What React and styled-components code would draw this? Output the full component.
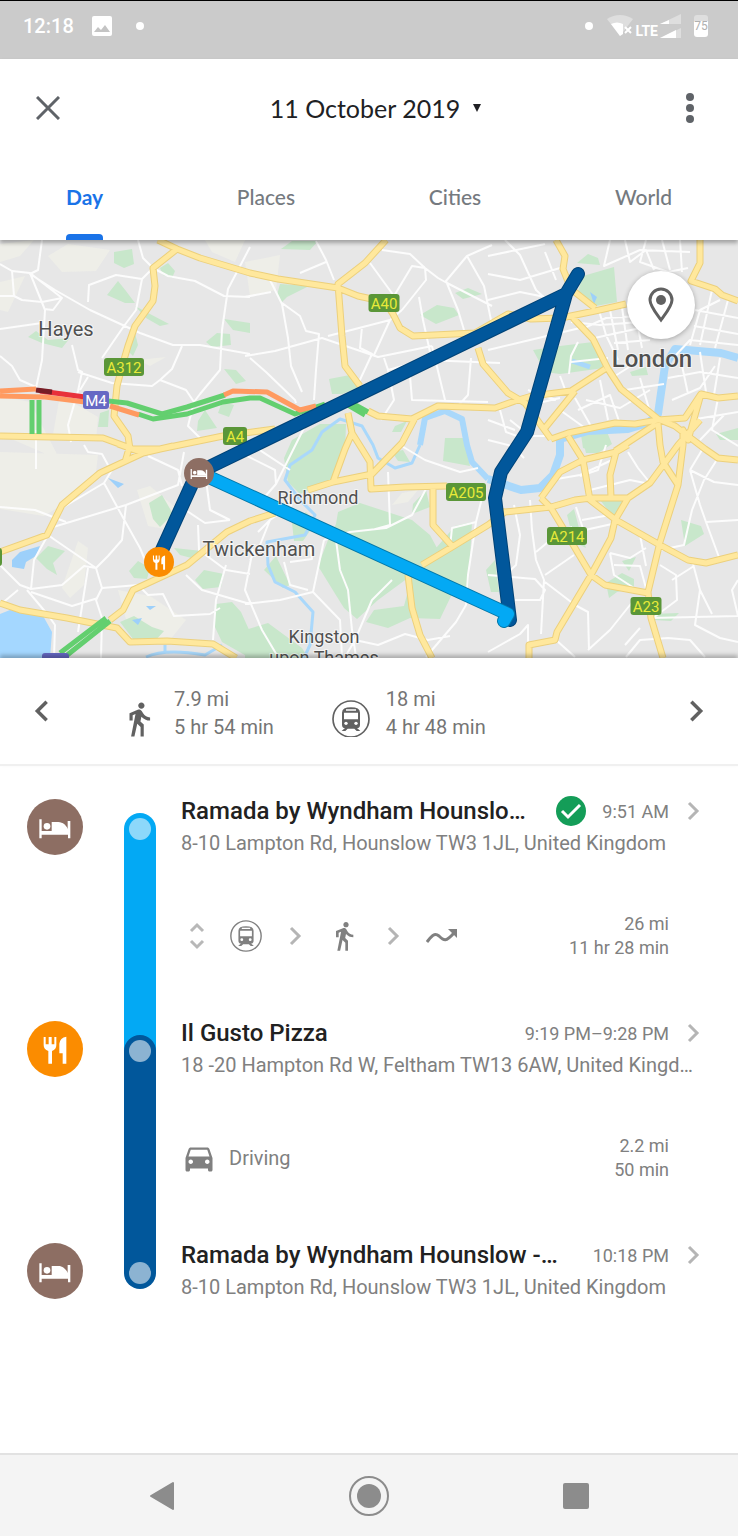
import React from 'react';
import styled, { createGlobalStyle } from 'styled-components';

const GlobalStyle = createGlobalStyle`
  * {
    box-sizing: border-box;
  }
  body {
    margin: 0;
    background-color: white;
    font-family: Roboto, "Liberation Sans", sans-serif;
  }
  button {
    background: none;
    border: none;
    color: inherit;
    cursor: pointer;
    font: inherit;
    padding: 0;
  }
  svg {
    display: block;
  }
`;

const Page = styled.div`
  display: flex;
  flex-direction: column;
  min-height: 100vh;
`;

const StatusBar = styled.div`
  display: flex;
  justify-content: space-between;
  align-items: flex-start;
  height: 59px;
  padding: 12px 30px 0 23px;
  background-color: #cbcbcb;
  border-top: 1px solid black;
  color: white;
`;

const StatusGroup = styled.div`
  display: flex;
  align-items: center;
  height: 26px;
`;

const Clock = styled.span`
  font-size: 20px;
  font-weight: 500;
  margin-right: 18px;
`;

const StatusDot = styled.span`
  width: 8px;
  height: 8px;
  border-radius: 50%;
  background-color: white;
  margin: 0 14px 0 24px;
`;

const Network = styled.span`
  align-self: flex-end;
  font-size: 14px;
  font-weight: 700;
  line-height: 16px;
  margin: 0 2px 0 1px;
`;

const Battery = styled.div`
  display: flex;
  align-items: center;
  justify-content: center;
  width: 14px;
  height: 22px;
  margin-left: 13px;
  border-radius: 3px;
  background: linear-gradient(#dedede 6px, white 6px);
  color: #b0b0b0;
  font-size: 12px;
`;

const Header = styled.header`
  position: relative;
  z-index: 1;
  background-color: white;
  box-shadow: 0 3px 4px rgba(0, 0, 0, 0.3);
  font-family: Lato, Roboto, sans-serif;
`;

const TitleBar = styled.div`
  display: flex;
  align-items: center;
  justify-content: space-between;
  height: 98px;
  padding: 0 30px;
  color: #5f6368;
`;

const IconButton = styled.button`
  display: flex;
  align-items: center;
  justify-content: center;
  width: 36px;
  height: 36px;
`;

const DateButton = styled.button`
  display: flex;
  align-items: center;
  gap: 12px;
  padding-left: 14px;
  color: #202124;
  font-size: 25px;
`;

const Tabs = styled.nav`
  display: flex;
  justify-content: space-between;
  padding: 0 66px;
`;

const Tab = styled.button`
  display: flex;
  flex-direction: column;
  align-items: center;
  justify-content: space-between;
  height: 83px;
  color: ${props => props.$active ? '#1a73e8' : '#757a7f'};
  font-size: 21px;
  font-weight: ${props => props.$active ? 700 : 500};
  line-height: 80px;

  &::after {
    content: '';
    width: 100%;
    height: 6px;
    margin-top: -6px;
    border-radius: 4px 4px 0 0;
    background-color: ${props => props.$active ? '#1a73e8' : 'transparent'};
  }
`;

const MapArea = styled.div`
  position: relative;
  aspect-ratio: 738 / 418;
  overflow: hidden;
`;

const MapDrawing = styled.svg`
  width: 100%;
  height: 100%;
`;

const PlaceButton = styled.button`
  position: absolute;
  top: 31px;
  right: 43px;
  display: flex;
  align-items: center;
  justify-content: center;
  width: 68px;
  height: 68px;
  border-radius: 50%;
  background-color: white;
  box-shadow: 0 1px 5px rgba(0, 0, 0, 0.3);
`;

const Summary = styled.section`
  position: relative;
  display: flex;
  align-items: center;
  justify-content: space-between;
  height: 108px;
  padding: 0 24px;
  background-color: white;
  border-bottom: 2px solid #f0f0f0;
  box-shadow: 0 -3px 4px rgba(0, 0, 0, 0.25);
`;

const Totals = styled.div`
  display: flex;
  flex: 1;
  gap: 58px;
  padding: 4px 0 0 60px;
`;

const Total = styled.div`
  display: flex;
  align-items: flex-end;
  gap: 16px;
  color: #757575;
  font-size: 20px;
  line-height: 28px;
`;

const TotalIcon = styled.div`
  width: 38px;
  height: 37px;
  margin-bottom: 4px;
  overflow: hidden;
  color: #616161;
`;

const Timeline = styled.ol`
  flex: 1;
  list-style: none;
  margin: 0;
  padding: 29px 33px 0 27px;
`;

const Item = styled.li`
  display: flex;
`;

const PlaceBadge = styled.div`
  width: 56px;
  height: 56px;
  margin-top: 4px;
`;

// Each track runs down behind the rounded head of the next one
const Track = styled.div`
  width: 32px;
  height: ${props => props.$last ? '32px' : 'auto'};
  margin: 18px 25px ${props => props.$last ? '0' : '-34px'} 41px;
  padding: 5px;
  background-color: ${props => props.$color};
  border-radius: ${props => props.$last ? '0 0 16px 16px' : '16px 16px 0 0'};
`;

const TrackDot = styled.div`
  width: 22px;
  height: 22px;
  border-radius: 50%;
  background-color: rgba(255, 255, 255, 0.55);
`;

const Details = styled.div`
  flex: 1;
  min-width: 0;
`;

const StopLink = styled.a`
  display: block;
  color: #808080;
  text-decoration: none;
`;

const StopHead = styled.div`
  display: flex;
  align-items: center;
  height: 32px;
`;

const StopName = styled.div`
  flex: 1;
  min-width: 0;
  overflow: hidden;
  text-overflow: ellipsis;
  white-space: nowrap;
  color: #212121;
  font-size: 24px;
  font-weight: 500;
`;

const StopTime = styled.div`
  font-size: 18px;
  margin: 0 12px 0 16px;
`;

const Address = styled.div`
  overflow: hidden;
  text-overflow: ellipsis;
  white-space: nowrap;
  font-size: 20px;
  line-height: 32px;
`;

const Leg = styled.div`
  display: flex;
  align-items: center;
  justify-content: space-between;
  padding: 53px 36px 57px 0;
  color: #808080;
`;

const LegModes = styled.div`
  display: grid;
  grid-auto-flow: column;
  grid-auto-columns: 32px;
  align-items: center;
  justify-items: center;
  gap: 17px;
`;

const LegMode = styled.div`
  display: flex;
  align-items: center;
  gap: 12px;
  font-size: 20px;
`;

const LegTotals = styled.div`
  font-size: 18px;
  line-height: 24px;
  text-align: right;
`;

const NavBar = styled.nav`
  display: flex;
  height: 83px;
  padding: 0 58px;
  background-color: #f4f4f4;
  border-top: 2px solid #e2e2e2;
`;

const NavButton = styled.button`
  display: flex;
  flex: 1;
  align-items: center;
  justify-content: center;
`;

// Icons

const Chevron = ({ size = 24, color = '#b5b5b5', flip = false }) => (
  <svg width={size} height={size} viewBox="0 0 24 24" fill="none" stroke={color} strokeWidth="3">
    <path d={flip ? 'M16 4L8 12L16 20' : 'M8 4L16 12L8 20'} />
  </svg>
);

const WalkIcon = ({ size = 32 }) => (
  <svg width={size} height={size} viewBox="0 0 24 24" fill="currentColor">
    <path d="M13.5 5.5c1.1 0 2-.9 2-2s-.9-2-2-2-2 .9-2 2 .9 2 2 2zM9.8 8.9L7 23h2.1l1.8-8 2.1 2v6h2v-7.5l-2.1-2 .6-3C14.8 12 16.8 13 19 13v-2c-1.9 0-3.5-1-4.3-2.4l-1-1.6c-.4-.6-1-1-1.7-1-.3 0-.5.1-.8.1L6 8.3V13h2V9.6l1.8-.7" />
  </svg>
);

const TrainIcon = ({ size = 32 }) => (
  <svg width={size} height={size} viewBox="0 0 114 114">
    <circle cx="57" cy="57" r="54" fill="none" stroke="currentColor" strokeWidth="5" />
    <path d="M30 74V38Q30 22 57 22Q84 22 84 38V74Q84 84 75 84L85 93H74L67 86H47L40 93H29L39 84Q30 84 30 74z" fill="currentColor" />
    <path d="M36 38H78V58H36zM42 28H72V32H42z" fill="white" />
    <circle cx="42" cy="70" r="5" fill="white" />
    <circle cx="72" cy="70" r="5" fill="white" />
  </svg>
);

const ExpandIcon = () => (
  <svg width="32" height="32" viewBox="0 0 32 32" fill="none" stroke="#b8b8b8" strokeWidth="3">
    <path d="M10 11L16 5L22 11M10 21L16 27L22 21" />
  </svg>
);

const MovingIcon = () => (
  <svg width="32" height="32" viewBox="0 0 32 32">
    <path d="M1 22C5 17 8 12 13 16C18 21 20 22 28 13" fill="none" stroke="currentColor" strokeWidth="3" />
    <path d="M22 9H31V18z" fill="currentColor" />
  </svg>
);

const CarIcon = () => (
  <svg width="36" height="36" viewBox="0 0 24 24" fill="currentColor">
    <path d="M18.92 6.01C18.72 5.42 18.16 5 17.5 5h-11c-.66 0-1.21.42-1.42 1.01L3 12v8c0 .55.45 1 1 1h1c.55 0 1-.45 1-1v-1h12v1c0 .55.45 1 1 1h1c.55 0 1-.45 1-1v-8l-2.08-5.99zM6.5 16c-.83 0-1.5-.67-1.5-1.5S5.67 13 6.5 13s1.5.67 1.5 1.5S7.33 16 6.5 16zm11 0c-.83 0-1.5-.67-1.5-1.5s.67-1.5 1.5-1.5 1.5.67 1.5 1.5-.67 1.5-1.5 1.5zM5 11l1.5-4.5h11L19 11H5z" />
  </svg>
);

const CheckIcon = () => (
  <svg width="30" height="30" viewBox="0 0 30 30">
    <circle cx="15" cy="15" r="15" fill="#149d58" />
    <path d="M6 15L12 21L24 9" fill="none" stroke="white" strokeWidth="3" />
  </svg>
);

const HotelIcon = props => (
  <svg viewBox="0 0 168 168" {...props}>
    <circle cx="84" cy="84" r="84" fill="#8d6e63" />
    <path d="M37 61H44V96H122V66H130V118H123V107H44V118H37z" fill="white" />
    <path d="M74 69H94C108 69 118 80 124 92V97H74z" fill="white" />
    <circle cx="60" cy="82" r="10" fill="white" />
  </svg>
);

const FoodIcon = props => (
  <svg viewBox="0 0 168 168" {...props}>
    <circle cx="84" cy="84" r="84" fill="#fb8c00" />
    <path d="M50 48H56V70H65V48H74V70H82V48H88V72Q88 86 75 90V128H64V90Q50 86 50 72z" fill="white" />
    <path d="M97 92V68Q99 50 118 47V128H107V97H97z" fill="white" />
  </svg>
);

// Map geometry

const parks = [
  'M114 252L132 249L134 264L124 268L114 263z',
  'M160 268L168 263L175 271L172 278L163 275z',
  'M118 281L126 291L135 303L125 303L107 295z',
  'M135 306L150 314L169 324L160 326L146 318z',
  'M28 337L36 331L48 340L70 338L62 348L42 343z',
  'M224 319L250 323L250 333L233 330z',
  'M206 342L217 333L230 334L231 345L212 347z',
  'M135 333L138 345L133 356L129 352z',
  'M100 413L109 410L108 427L98 427z',
  'M224 369L236 370L246 381L236 384z',
  'M198 421L205 410L217 428L197 431z M222 402L234 405L229 417L218 413z',
  'M281 249L292 241L318 241L310 250z',
  'M280 284L309 286L287 297L281 303L277 295z',
  'M420 315L437 305L454 308L459 315L436 324z',
  'M455 293L468 288L482 294L463 299z',
  'M329 379L350 375L358 388L342 394L332 394z',
  'M577 263L588 254L598 258L600 265L588 264z',
  'M583 276L614 267L617 302L596 306L578 291z',
  'M533 350L560 346L593 342L604 368L560 374L545 372z',
  'M581 435L607 432L612 444L598 453L583 448z',
  'M630 372L646 367L648 375L632 376z',
  'M716 434L738 428L738 440L720 440z',
  'M284 458L292 440L320 424L346 424L345 452L332 480L300 494L288 482z',
  'M395 426L407 421L401 432L392 432z',
  'M445 438L465 438L470 466L443 461z',
  'M392 452L403 450L410 462L398 461z',
  'M338 512L360 503L412 520L430 535L437 548L412 575L378 600L357 619L344 608L334 592L318 566L328 540L336 524z',
  'M412 576L455 526L472 522L468 595L453 592L440 619L410 618L388 628L366 622L374 610L404 606z',
  'M413 504L426 490L430 507L412 514z',
  'M264 570L276 556L290 585L283 588z',
  'M292 523L306 512L316 522L303 541L294 541z',
  'M245 630L268 623L302 648L308 658L245 658z',
  'M216 604L232 602L241 612L250 632L250 658L222 642L214 625z',
  'M149 503L162 495L173 514L160 527L153 519z',
  'M129 571L138 561L150 568L147 579L134 578z',
  'M174 548L202 551L199 560L180 555z',
  'M195 580L204 570L224 574L221 587L203 589z',
  'M36 558L48 546L65 551L53 563L57 575L47 569z',
  'M120 622L134 616L152 627L164 631L155 641L133 639z',
  'M681 520L701 526L704 534L685 546z',
  'M600 500L624 500L618 521L611 514z',
  'M567 515L574 509L580 532L586 548L574 542z',
  'M606 583L622 573L634 579L634 588L617 592L609 598z',
  'M622 561L636 557L629 571z',
  'M651 614L679 613L671 621L654 620z',
  'M584 445L603 445L598 453L586 453z',
  'M486 570L495 560L499 592L491 592z',
];

const fields = [
  'M48 256L68 244L110 250L96 271L62 272z',
  'M0 282L25 276L8 312L0 310z',
  'M0 396L30 402L60 460L0 434z',
  'M0 452L98 455L96 473L62 505L44 516L0 509z',
  'M205 240L245 240L235 262L212 252z',
  'M0 244L34 240L20 256L0 262z',
  'M62 588L78 541L88 548L84 585L70 598z',
  'M245 262L280 255L276 290L250 296z',
  'M138 360L166 357L150 366z',
  'M60 395L98 417L96 440L52 440z',
  'M392 505L402 493L418 490L408 502z',
  'M137 490L150 486L176 508L165 529L148 526z',
  'M118 590L150 596L186 620L170 640L130 634z',
];

const minorRoads = [
  'M42 240L38 270L30 274L55 290L90 310L140 333L173 345L200 345L250 354',
  'M0 264L12 271L30 273L45 310L42 360L36 388',
  'M0 296L14 296L22 300L42 302L62 298',
  'M30 273L62 298L53 310L44 309',
  'M0 329L42 323',
  'M12 271L14 296',
  'M88 302L89 285L116 275L142 279L153 268',
  'M138 240L143 258L153 268',
  'M142 279L136 310L124 326L102 358',
  'M153 268L168 276L195 281L224 296L250 297',
  'M250 247L228 289L222 330L220 370L200 394L194 402',
  'M72 345L78 370L82 372L78 391L68 425L71 442',
  'M78 372L112 383L152 386L160 380L172 369L182 346',
  'M160 380L186 390L194 402L188 426L204 442',
  'M88 377L80 390',
  'M0 356L12 366L20 380L38 388',
  'M36 430L36 469',
  'M316 241L326 260L334 280',
  'M326 262L300 273',
  'M245 297L271 292M270 280L282 304L288 338L291 366L302 392',
  'M282 303L300 316L306 331L319 334L316 370L314 400',
  'M245 356L275 351L322 338L378 357L432 346',
  'M250 358L266 372L295 400L296 403',
  'M328 336L390 320L402 310',
  'M362 327L360 348L372 354L358 384',
  'M390 320L374 355',
  'M382 250L410 254L425 268L438 278L447 283L492 306',
  'M370 263L386 285L394 296L412 266L425 268',
  'M425 268L426 280L402 310',
  'M419 297L423 320L430 352',
  'M492 245L467 256L446 281L458 310L464 330',
  'M467 256L484 286L492 325',
  'M384 358L388 370L425 360L500 363',
  'M388 370L394 400L381 420',
  'M410 376L412 400L488 402',
  'M432 346L445 400M471 358L468 395L456 408',
  'M488 350L530 340L580 328',
  'M488 300L520 292L560 300',
  'M488 274L520 280L560 268',
  'M505 240L520 255L536 290L560 312',
  'M545 252L556 280M488 256L545 244',
  'M610 240L604 266L640 250L690 252',
  'M625 240L630 262L646 250L654 270',
  'M646 240L640 262L668 272L688 268',
  'M662 240L670 270M680 240L682 272',
  'M580 330L606 318L640 316M590 339L640 328',
  'M598 307L606 335L618 360M610 310L618 350',
  'M622 307L628 350M634 306L642 348',
  'M571 322L600 325L640 322M614 343L650 340',
  'M569 374L571 356L578 342M571 362L608 358',
  'M668 378L700 372L738 378M672 400L700 388L715 366',
  'M690 345L700 310L720 300M700 345L712 290M715 348L728 300',
  'M695 310L738 318M694 326L738 334M676 355L690 340L738 345',
  'M680 356L688 394M700 352L706 392M720 358L714 395',
  'M640 378L650 412M625 390L664 384M612 378L640 360',
  'M586 400L620 408L650 390M578 410L610 395L620 424',
  'M600 380L608 420M575 398L592 428M560 410L585 428',
  'M510 420L530 436L548 436M500 410L506 432L528 440',
  'M530 405L560 398M528 390L556 400M560 376L566 392',
  'M488 420L515 430M488 440L512 446L524 458',
  'M690 420L738 412M700 440L724 415M718 398L712 430L738 446',
  'M252 445L290 470M245 455L275 470L276 484L256 507',
  'M276 484L308 420L338 410',
  'M388 472L390 525L372 530',
  'M400 445L425 460L460 472L478 468',
  'M426 489L412 515L386 528L350 532L324 540',
  'M484 490L476 522L468 575L466 605L456 622L426 657',
  'M450 547L452 528L476 522',
  'M392 580L372 600L355 640L345 657',
  'M336 540L340 570L348 590L352 630L356 657',
  'M355 640L378 645L405 634L428 640L450 636',
  'M324 540L313 592L340 620L342 657',
  'M253 549L245 590L262 630L278 657',
  'M245 604L280 600L313 592',
  'M258 532L290 500M292 505L270 520L260 545L250 560',
  'M290 562L312 559L310 545',
  'M284 562L290 585L308 590',
  'M84 445L88 452L102 454L108 465',
  'M148 456L178 470L182 486',
  'M104 483L126 523L140 548L145 560',
  'M50 528L126 505L178 485L184 452',
  'M126 505L122 540L108 556L96 568L55 540L48 535',
  'M0 507L35 510L66 522M55 512L104 483L112 470',
  'M48 535L34 560L31 589L20 585L0 565',
  'M31 589L62 585L84 566L96 568L102 588L96 600L102 618L101 658',
  'M0 605L18 590M31 592L72 606L98 598',
  'M88 568L78 632M27 590L48 615L55 625L54 658',
  'M102 588L138 585L148 595L163 594L174 616L210 614L220 608',
  'M186 575L202 590L250 604M226 565L216 600L213 640',
  'M178 505L205 523L230 520M206 480L210 510L230 520M198 525L199 550L226 570L250 574',
  'M530 500L532 530L536 560L544 580L541 634',
  'M514 505L520 535L516 565L500 580M488 575L535 579L545 590L540 600L515 600',
  'M545 582L575 605L588 612L589 650M556 640L575 657',
  'M488 652L520 634L528 625L528 645',
  'M536 552L560 532L572 527M545 575L574 555',
  'M576 507L585 535M582 520L610 515M585 530L612 524',
  'M551 480L580 475L612 460M590 490L630 480L650 484',
  'M628 452L638 468L650 483M606 445L598 470L580 476',
  'M690 470L700 505L706 522L720 560M706 522L738 520',
  'M718 458L704 480L692 510L684 545L660 550',
  'M690 470L714 482L738 485M705 445L690 470',
  'M610 553L630 558L646 548M610 553L614 575L634 588',
  'M614 565L640 566L647 592M640 535L646 566',
  'M660 565L676 575L677 600L653 618',
  'M692 560L700 590L695 625L720 638L738 642M672 580L694 566',
  'M700 590L712 614M651 618L738 616L732 590L738 580',
  'M634 600L610 630L588 650M668 638L690 640L705 657',
  'M668 638L640 640L626 657M640 628L625 645',
];

const mainRoads = [
  'M158 240L177 249L200 258L250 273L278 279L338 288L358 296L372 299L386 303L393 314L400 328L413 336L475 333L508 314L531 319L561 318L595 311L626 304',
  'M177 249L153 268L155 286L153 301L135 326L128 346L123 363L117 386L114 416L128 436L130 449',
  'M0 436L103 438L133 449L160 449L223 436L275 429',
  'M173 446L143 453L100 473L62 505L47 535L0 552M118 444L143 453M130 445L125 462',
  'M0 603L20 610L67 618L117 628L130 642L167 641L213 644L236 658',
  'M110 620L123 610L133 590L187 565L227 532L250 521L275 513',
  'M308 490L333 482L372 474L402 443L415 418',
  'M333 482L345 449L352 433L362 449L370 462L371 489L405 487L447 486',
  'M433 487L433 525L452 546M422 565L452 547L488 525L505 512',
  'M408 575L412 608L420 635L432 658',
  'M386 240L365 263L338 284L342 336L345 366L360 386M348 413L352 433',
  'M368 411L378 416L412 419L438 406L495 408L515 401L532 396L571 391L605 369',
  'M478 348L483 364L508 393L525 403L551 439',
  'M556 240L565 256L563 269L571 289L595 308',
  'M573 318L593 339L608 369L621 389L658 419L675 426L705 449L718 458L738 460',
  'M700 240L700 263L691 281L715 289L722 295L738 301',
  'M551 439L568 433L615 423L635 424L658 420L685 418L701 394L718 398L738 396',
  'M575 391L545 428M658 423L660 445L663 462L678 485M656 424L615 451',
  'M701 394L688 440L683 430L683 445L678 485L660 542L648 592L651 618L663 658',
  'M700 420L678 445L650 483L628 498L591 498L575 500L551 507L505 512L492 510',
  'M541 498L560 472L583 460L616 452L628 445M568 436L583 460L590 500L616 520L660 545L688 560L706 563L738 555',
  'M628 498L615 520L611 538L591 575L557 632L555 640L529 645L529 658',
  'M541 498L551 508L575 548L591 575L605 585L648 593M616 452L610 475L611 497',
];

const labels = [
  { x: 66, y: 336, size: 20, text: 'Hayes' },
  { x: 652, y: 367, size: 24, weight: 500, text: 'London' },
  { x: 318, y: 504, size: 18, text: 'Richmond' },
  { x: 259, y: 556, size: 20, text: 'Twickenham' },
  { x: 324, y: 643, size: 18, text: 'Kingston' },
  { x: 324, y: 664, size: 18, text: 'upon Thames' },
];

const shields = [
  { x: 124, y: 367, w: 40, text: 'A312' },
  { x: 384, y: 303, w: 31, text: 'A40' },
  { x: 235, y: 436, w: 24, text: 'A4' },
  { x: 466, y: 492, w: 40, text: 'A205' },
  { x: 567, y: 536, w: 40, text: 'A214' },
  { x: 646, y: 606, w: 31, text: 'A23' },
  { x: 96, y: 400, w: 26, text: 'M4', motorway: true },
];

const RouteLine = ({ d, color, edge }) => (
  <g fill="none" strokeLinecap="round" strokeLinejoin="round">
    <path d={d} stroke={edge} strokeWidth="14" />
    <path d={d} stroke={color} strokeWidth="12" />
  </g>
);

const CityMap = () => (
  <MapDrawing viewBox="0 240 738 418" preserveAspectRatio="xMidYMid slice" role="img" aria-label="Map of the day">
    <rect x="0" y="240" width="738" height="418" fill="#e7e7e7" />
    <path d={fields.join('')} fill="#eeeee8" />
    <path d={parks.join('')} fill="#c8e7cb" />
    <g fill="none" stroke="#a9d8fb" strokeLinejoin="round">
      <path d="M738 358L721 353L675 349L665 366L661 393L658 414L648 423L628 429L588 431L560 439L560 455L553 475L540 488L521 490L488 479" strokeWidth="8" />
      <path d="M488 479L472 462L467 445L462 419L445 411L425 418L420 445" strokeWidth="6" />
      <path d="M420 445L412 463L395 468L378 458L373 445L362 426L340 419L322 432L312 450L290 465L285 480L300 500L315 515L305 535L267 542L268 565L275 582L295 592L313 612L310 645L304 658" strokeWidth="3" />
      <path d="M572 361L590 367" strokeWidth="5" />
      <path d="M165 645V651M146 657Q165 648 205 655L222 645" strokeWidth="3" />
    </g>
    <path d="M0 614L10 610L42 614L52 632L50 658L0 658z" fill="#a4d7ff" />
    <path d="M12 560L20 552L40 546L36 556L26 562L24 569L12 567z M108 478L124 484L118 488z M590 292L597 297L594 304z M132 620L142 618L138 625z M146 606L156 606L150 610z" fill="#9dd0fa" />
    <path d={minorRoads.join('')} fill="none" stroke="#fcfcfc" strokeWidth="2" strokeLinejoin="round" />
    <g fill="none" strokeLinejoin="round">
      <path d={mainRoads.join('')} stroke="#ecd07c" strokeWidth="7" />
      <path d={mainRoads.join('')} stroke="#ffe89d" strokeWidth="5" />
    </g>
    <g fill="none" strokeLinejoin="round">
      <path d="M32 400V434M39 400V434M66 656L110 621M60 653L106 618" stroke="#63cf6f" strokeWidth="5" />
      <path d="M138 414L153 419L187 414L223 402L250 398L260 398L295 414L325 404M350 402L368 412M348 405L365 415" stroke="#63cf6f" strokeWidth="5" />
      <path d="M108 401L127 403L162 414L187 407L225 395" stroke="#63cf6f" strokeWidth="5" />
      <path d="M0 391L36 389M0 396L45 397L85 402M110 406L139 415M224 395L233 391L267 392L300 410L316 406" stroke="#ff9a60" strokeWidth="5" />
      <path d="M40 391L85 397" stroke="#e8303a" strokeWidth="5" />
      <path d="M36 390L52 392" stroke="#761d26" strokeWidth="5" />
    </g>
    {shields.map(shield => (
      <g key={shield.text}>
        <rect x={shield.x - shield.w / 2} y={shield.y - 9} width={shield.w} height="18" rx="3" fill={shield.motorway ? '#6669c4' : '#5a9638'} />
        <text x={shield.x} y={shield.y + 6} textAnchor="middle" fontSize="15" fill={shield.motorway ? 'white' : '#e8ea3a'}>{shield.text}</text>
      </g>
    ))}
    <rect x="-10" y="548" width="12" height="18" rx="3" fill="#5a9638" />
    <rect x="42" y="653" width="27" height="18" rx="3" fill="#6669c4" />
    <RouteLine d="M162 550L197 473L566 294L578 274L566 294L527 432L501 472L495 498L510 620" color="#01579b" edge="#014377" />
    <RouteLine d="M200 473L508 614L504 621" color="#03a9f4" edge="#0277a8" />
    {labels.map(label => (
      <text key={label.text} x={label.x} y={label.y} fontSize={label.size} fontWeight={label.weight || 400} textAnchor="middle" fill="#505050" stroke="#ffffff" strokeOpacity="0.6" strokeWidth="2" paintOrder="stroke">
        {label.text}
      </text>
    ))}
    <HotelIcon x="184" y="458" width="30" height="30" />
    <FoodIcon x="144" y="547" width="30" height="30" />
  </MapDrawing>
);

const tabs = ['Day', 'Places', 'Cities', 'World'];

const stops = [
  {
    Icon: HotelIcon,
    track: '#03a9f4',
    name: 'Ramada by Wyndham Hounslo…',
    confirmed: true,
    time: '9:51 AM',
    address: '8-10 Lampton Rd, Hounslow TW3 1JL, United Kingdom',
  },
  {
    Icon: FoodIcon,
    track: '#01579b',
    name: 'Il Gusto Pizza',
    time: '9:19 PM–9:28 PM',
    address: '18 -20 Hampton Rd W, Feltham TW13 6AW, United Kingd…',
  },
  {
    Icon: HotelIcon,
    track: '#01579b',
    name: 'Ramada by Wyndham Hounslow -…',
    time: '10:18 PM',
    address: '8-10 Lampton Rd, Hounslow TW3 1JL, United Kingdom',
  },
];

const legs = [
  {
    modes: <LegModes><ExpandIcon /><TrainIcon /><Chevron /><WalkIcon /><Chevron /><MovingIcon /></LegModes>,
    distance: '26 mi',
    duration: '11 hr 28 min',
  },
  {
    modes: <LegMode><CarIcon />Driving</LegMode>,
    distance: '2.2 mi',
    duration: '50 min',
  },
];

const TimelineItem = ({ stop, leg }) => (
  <Item>
    <PlaceBadge><stop.Icon width="56" height="56" /></PlaceBadge>
    <Track $color={stop.track} $last={!leg}><TrackDot /></Track>
    <Details>
      <StopLink href="#">
        <StopHead>
          <StopName>{stop.name}</StopName>
          {stop.confirmed && <CheckIcon />}
          <StopTime>{stop.time}</StopTime>
          <Chevron />
        </StopHead>
        <Address>{stop.address}</Address>
      </StopLink>
      {leg && (
        <Leg>
          {leg.modes}
          <LegTotals>{leg.distance}<br />{leg.duration}</LegTotals>
        </Leg>
      )}
    </Details>
  </Item>
);

const App = () => (
  <Page>
    <GlobalStyle />
    <StatusBar>
      <StatusGroup>
        <Clock>12:18</Clock>
        <svg width="20" height="20" viewBox="0 0 20 20">
          <rect width="20" height="20" rx="2" fill="white" />
          <path d="M2 16L6 11L9 14L13 9L18 16z" fill="#c4c4c4" />
        </svg>
        <StatusDot />
      </StatusGroup>
      <StatusGroup>
        <StatusDot />
        <svg width="27" height="24" viewBox="0 0 27 24">
          <path d="M0 5Q13 -3 26 5L13 22z" fill="#dedede" />
          <path d="M4 10Q10 7 16 10V20L13 22z" fill="white" />
          <path d="M18 13L24 19M24 13L18 19" stroke="white" strokeWidth="2" />
        </svg>
        <Network>LTE</Network>
        <svg width="21" height="24" viewBox="0 0 21 24">
          <path d="M0 10L21 0V10zM0 24L21 14V24z" fill="#dedede" />
          <path d="M0 10L9 6V10zM0 24L16 16V24z" fill="white" />
        </svg>
        <Battery>75</Battery>
      </StatusGroup>
    </StatusBar>
    <Header>
      <TitleBar>
        <IconButton aria-label="Close">
          <svg width="24" height="24" viewBox="0 0 24 24" stroke="currentColor" strokeWidth="3">
            <path d="M1 1L23 23M23 1L1 23" />
          </svg>
        </IconButton>
        <DateButton>
          11 October 2019
          <svg width="10" height="10" viewBox="0 0 10 10"><path d="M1 1H9L5 9z" fill="currentColor" /></svg>
        </DateButton>
        <IconButton aria-label="More options">
          <svg width="8" height="30" viewBox="0 0 8 30" fill="currentColor">
            <circle cx="4" cy="4" r="4" />
            <circle cx="4" cy="15" r="4" />
            <circle cx="4" cy="26" r="4" />
          </svg>
        </IconButton>
      </TitleBar>
      <Tabs>
        {tabs.map(tab => <Tab key={tab} $active={tab === 'Day'}>{tab}</Tab>)}
      </Tabs>
    </Header>
    <MapArea>
      <CityMap />
      <PlaceButton aria-label="Show places">
        <svg width="26" height="36" viewBox="0 0 26 36">
          <path d="M13 33C8 26 2 19 2 13A11 11 0 0 1 24 13C24 19 18 26 13 33z" fill="none" stroke="#616161" strokeWidth="3" />
          <circle cx="13" cy="13" r="5" fill="#616161" />
        </svg>
      </PlaceButton>
    </MapArea>
    <Summary>
      <IconButton aria-label="Previous day"><Chevron size={28} color="#616161" flip /></IconButton>
      <Totals>
        <Total>
          <TotalIcon><WalkIcon size={38} /></TotalIcon>
          <div>7.9 mi<br />5 hr 54 min</div>
        </Total>
        <Total>
          <TotalIcon><TrainIcon size={38} /></TotalIcon>
          <div>18 mi<br />4 hr 48 min</div>
        </Total>
      </Totals>
      <IconButton aria-label="Next day"><Chevron size={28} color="#616161" /></IconButton>
    </Summary>
    <Timeline>
      {stops.map((stop, i) => <TimelineItem key={i} stop={stop} leg={legs[i]} />)}
    </Timeline>
    <NavBar>
      <NavButton aria-label="Back">
        <svg width="26" height="30" viewBox="0 0 26 30"><path d="M2 15L24 2V28z" fill="#8c8c8c" stroke="#8c8c8c" strokeWidth="2" strokeLinejoin="round" /></svg>
      </NavButton>
      <NavButton aria-label="Home">
        <svg width="40" height="40" viewBox="0 0 40 40">
          <circle cx="20" cy="20" r="19" fill="none" stroke="#8c8c8c" strokeWidth="2" />
          <circle cx="20" cy="20" r="12" fill="#8c8c8c" />
        </svg>
      </NavButton>
      <NavButton aria-label="Recent apps">
        <svg width="26" height="26" viewBox="0 0 26 26"><rect width="26" height="26" rx="2" fill="#8c8c8c" /></svg>
      </NavButton>
    </NavBar>
  </Page>
);

export default App;
